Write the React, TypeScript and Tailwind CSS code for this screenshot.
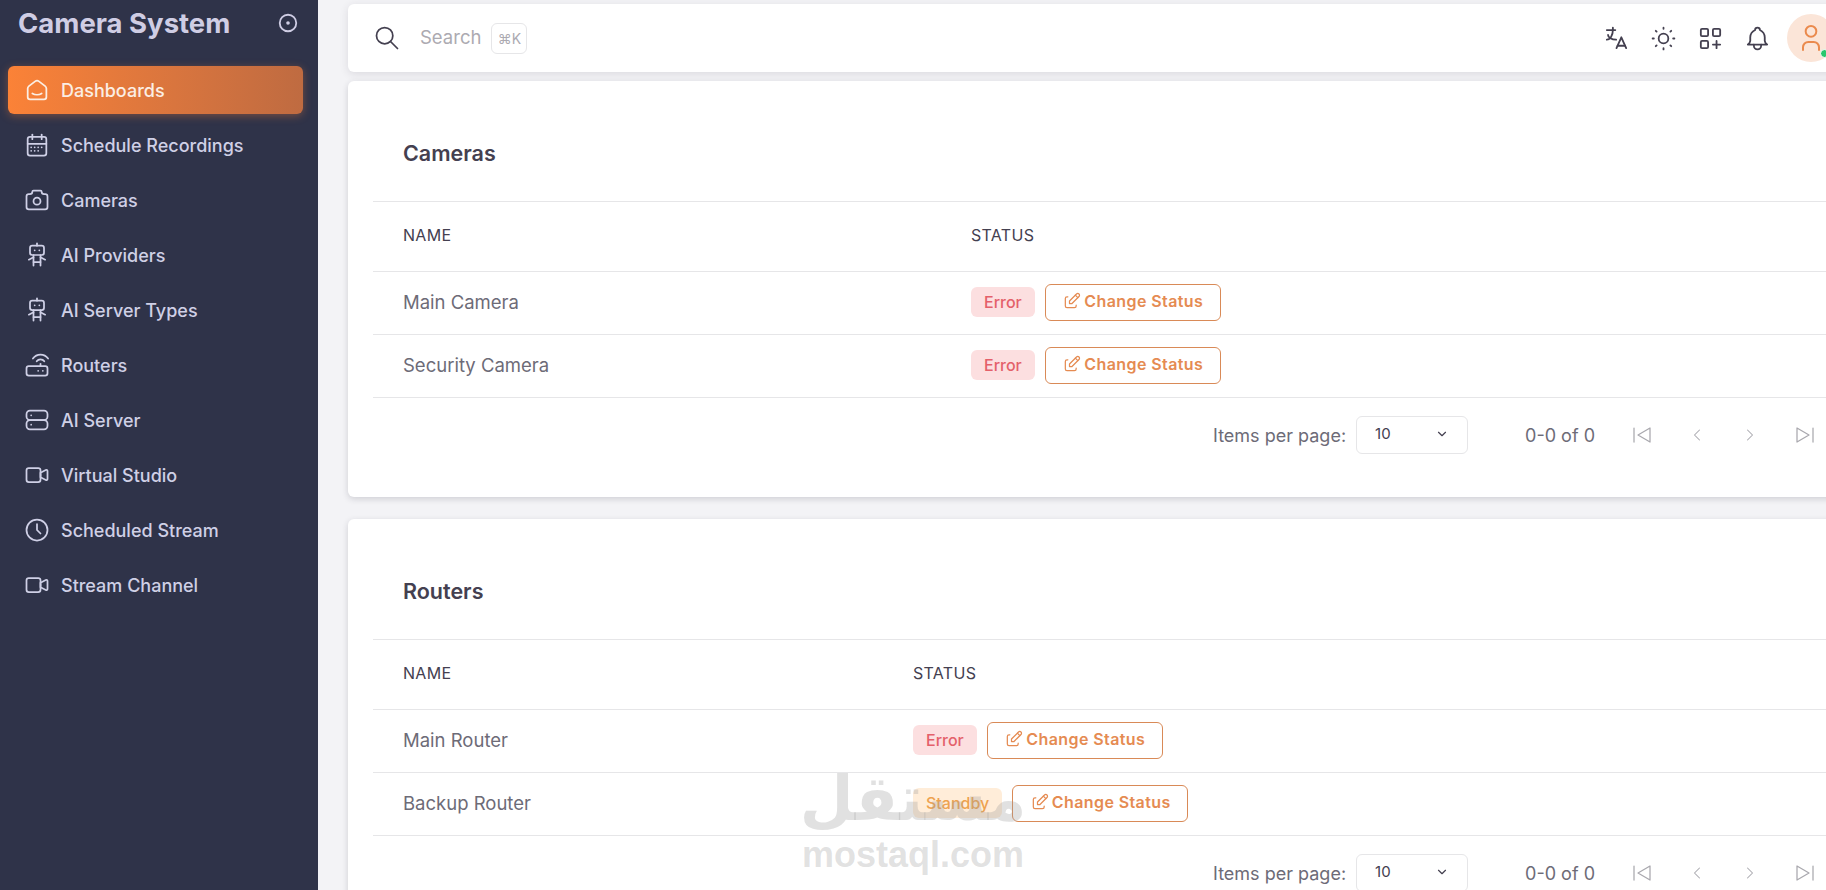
import React from 'react';
import {
  TbSmartHome, TbCalendarMonth, TbCamera, TbRobot, TbRouter, TbServer, TbVideo, TbClock,
  TbCircleDot, TbSearch, TbLanguage, TbSun, TbLayoutGridAdd, TbBell, TbUser, TbEdit,
  TbChevronDown, TbChevronLeft, TbChevronRight, TbPlayerSkipBack, TbPlayerSkipForward,
} from 'react-icons/tb';

const navItems = [
  { label: 'Dashboards', icon: TbSmartHome },
  { label: 'Schedule Recordings', icon: TbCalendarMonth },
  { label: 'Cameras', icon: TbCamera },
  { label: 'AI Providers', icon: TbRobot },
  { label: 'AI Server Types', icon: TbRobot },
  { label: 'Routers', icon: TbRouter },
  { label: 'AI Server', icon: TbServer },
  { label: 'Virtual Studio', icon: TbVideo },
  { label: 'Scheduled Stream', icon: TbClock },
  { label: 'Stream Channel', icon: TbVideo },
];

const Sidebar = () => (
  <aside className="w-[318px] shrink-0 h-full bg-[#2f3349]">
    <div className="h-[66px] flex items-start justify-between pl-[18px] pr-[19px]">
      <span className="text-[27.5px] leading-[46px] font-bold text-[#cfcde4]">Camera System</span>
      <TbCircleDot className="mt-[12px] text-[#cfcde4]" size={22} />
    </div>
    <nav className="flex flex-col gap-[7px] pl-[8px] pr-[15px]">
      {navItems.map((item, i) => {
        const Icon = item.icon;
        const active = i === 0;
        return (
          <div
            key={item.label}
            className={
              'h-[48px] flex items-center gap-[10px] pl-[15px] rounded-md text-[18px] font-medium ' +
              (active
                ? 'bg-gradient-to-r from-[#fb8237] to-[#bf6b41] text-[#fbeee4] shadow-[0_2px_8px_rgba(251,130,55,0.35)]'
                : 'text-[#cfd0e6]')
            }
          >
            <Icon size={28} strokeWidth={1.5} />
            <span>{item.label}</span>
          </div>
        );
      })}
    </nav>
  </aside>
);

const TopBar = () => (
  <header className="h-[68px] shrink-0 bg-white rounded-md shadow-[0_2px_8px_rgba(47,43,61,0.12)] flex items-center justify-between pl-[25px] pr-[13px]">
    <div className="flex items-center">
      <TbSearch size={28} strokeWidth={1.5} className="text-[#444050]" />
      <span className="ml-[19px] text-[18.5px] text-[#acaab1]">Search</span>
      <span className="ml-[10px] w-[36px] h-[31px] border border-[#e6e6e8] rounded-md flex items-center justify-center text-[14px] text-[#acaab1]">⌘K</span>
    </div>
    <div className="flex items-center text-[#444050]">
      <div className="flex items-center gap-[18px] mr-[15px]">
        <TbLanguage size={29} strokeWidth={1.5} />
        <TbSun size={29} strokeWidth={1.5} />
        <TbLayoutGridAdd size={29} strokeWidth={1.5} />
        <TbBell size={29} strokeWidth={1.5} />
      </div>
      <div className="relative w-[48px] h-[48px] rounded-full bg-[#fbe5d8] flex items-center justify-center text-[#ea8a4d]">
        <TbUser size={32} strokeWidth={1.5} />
        <span className="absolute right-[6px] bottom-[4px] w-[9px] h-[9px] rounded-full bg-[#28c76f] border border-white" />
      </div>
    </div>
  </header>
);

const StatusBadge = ({ status }: { status: string }) => (
  <span
    className={
      'h-[30px] px-[13px] rounded-md flex items-center text-[16px] font-medium ' +
      (status === 'Error' ? 'bg-[#fcdfe0] text-[#e4606a]' : 'bg-[#ffedd9] text-[#eea24f]')
    }
  >
    {status}
  </span>
);

const ChangeStatusButton = () => (
  <button className="h-[37px] w-[176px] border border-[#d98a57] rounded-md flex items-center justify-center gap-[2px] pb-[2px] text-[16px] font-semibold tracking-[0.4px] text-[#e58b52]">
    <TbEdit size={20} strokeWidth={1.5} />
    Change Status
  </button>
);

const Pagination = () => (
  <div className="h-[38px] flex items-center justify-end pr-[31px] mt-[18px] text-[#6d6b77]">
    <span className="text-[18px]">Items per page:</span>
    <div className="ml-[10px] w-[112px] h-[38px] border border-[#e6e6e8] rounded-md flex items-center justify-between pl-[18px] pr-[18px] pb-[2px] text-[15px] text-[#444050]">
      <span>10</span>
      <TbChevronDown size={14} />
    </div>
    <span className="ml-[57px] text-[18px]">0-0 of 0</span>
    <div className="ml-[35px] flex items-center gap-[33px] text-[#a9a8ae]">
      <TbPlayerSkipBack size={24} strokeWidth={1.25} />
      <TbChevronLeft size={20} strokeWidth={1.25} />
      <TbChevronRight size={20} strokeWidth={1.25} />
      <TbPlayerSkipForward size={24} strokeWidth={1.25} />
    </div>
  </div>
);

const DeviceCard = ({ title, nameWidth, rows }: { title: string; nameWidth: string; rows: { name: string; status: string }[] }) => (
  <section className="h-[416px] shrink-0 bg-white rounded-md shadow-[0_2px_6px_rgba(47,43,61,0.18)] pt-[47px]">
    <h2 className="pl-[55px] h-[50px] text-[21.5px] leading-[50px] font-semibold text-[#444050]">{title}</h2>
    <div className="ml-[25px] mt-[23px] border-t border-[#e6e6e8]">
      <div className="h-[70px] flex items-center border-b border-[#e6e6e8] pl-[30px] pb-[3px] text-[16px] text-[#444050] tracking-[0.3px]">
        <span className={nameWidth}>NAME</span>
        <span>STATUS</span>
      </div>
      {rows.map((row) => (
        <div key={row.name} className="h-[63px] flex items-center border-b border-[#e6e6e8] pl-[30px] text-[18.5px] text-[#6d6b77]">
          <span className={nameWidth}>{row.name}</span>
          <div className="flex items-center gap-[10px] -mt-[2px]">
            <StatusBadge status={row.status} />
            <ChangeStatusButton />
          </div>
        </div>
      ))}
      <Pagination />
    </div>
  </section>
);

export default function App() {
  return (
    <div className="relative h-screen w-full overflow-hidden flex bg-[#f3f3f6] font-['Inter',sans-serif]">
      <Sidebar />
      <main className="pl-[30px] pt-[4px] flex flex-col shrink-0 w-[1530px]">
        <TopBar />
        <div className="mt-[9px] flex flex-col gap-[22px]">
          <DeviceCard
            title="Cameras"
            nameWidth="w-[568px]"
            rows={[
              { name: 'Main Camera', status: 'Error' },
              { name: 'Security Camera', status: 'Error' },
            ]}
          />
          <DeviceCard
            title="Routers"
            nameWidth="w-[510px]"
            rows={[
              { name: 'Main Router', status: 'Error' },
              { name: 'Backup Router', status: 'Standby' },
            ]}
          />
        </div>
      </main>
      <div className="absolute left-[802px] top-[760px] w-[222px] flex flex-col items-center pointer-events-none text-[#9a9a9a]/30 font-bold font-['Liberation_Sans',sans-serif]">
        <span className="text-[62px] leading-[78px] font-['DejaVu_Sans',sans-serif]">مستقل</span>
        <span className="text-[36px] leading-[34px]">mostaql.com</span>
      </div>
    </div>
  );
}
